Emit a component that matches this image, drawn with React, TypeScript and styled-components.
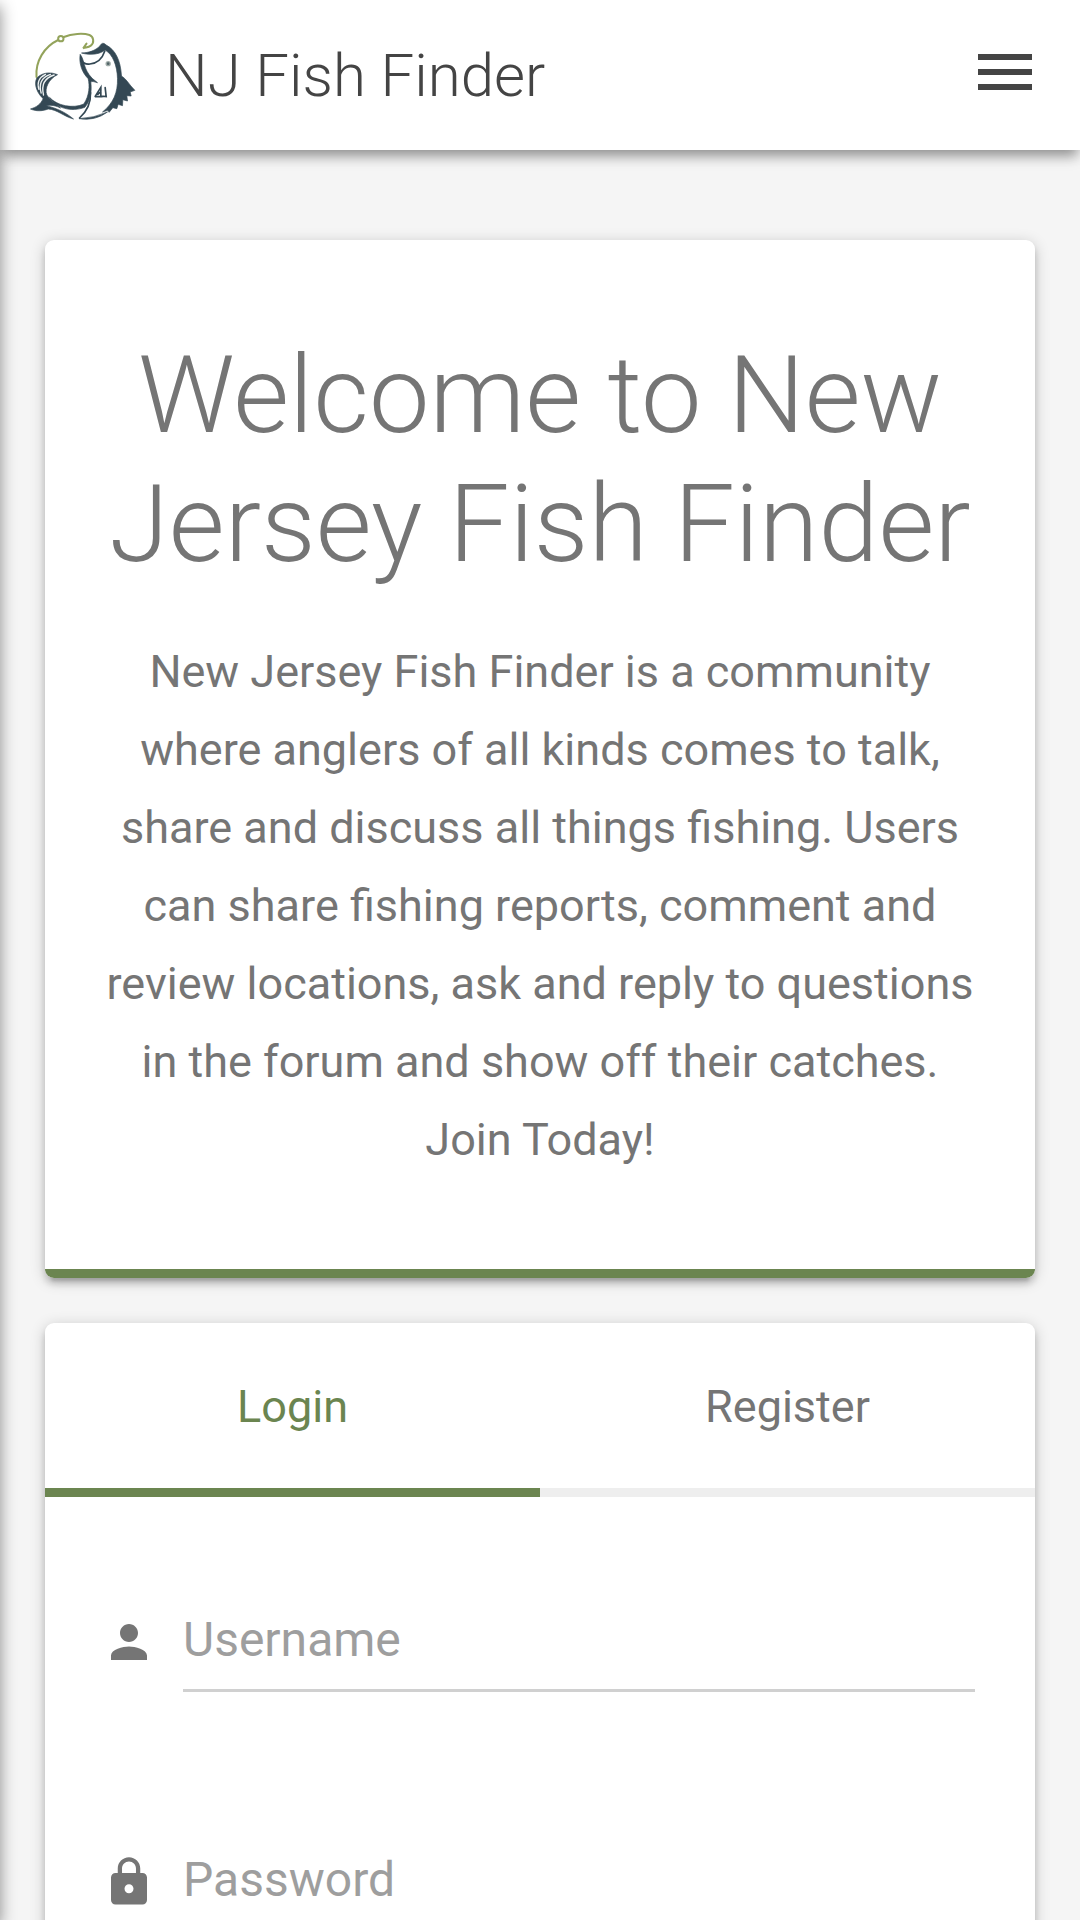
import React, { useState } from "react";
import styled, { createGlobalStyle } from "styled-components";

const green = "#6b8550";
const grey = "#757575";
const raised =
  "0 6px 6px 0 rgba(0,0,0,.14), 0 9px 3px -6px rgba(0,0,0,.12), 0 3px 15px 0 rgba(0,0,0,.2)";

const GlobalStyle = createGlobalStyle`
  *, *::before, *::after { box-sizing: border-box; }
  html { overflow-x: hidden; scrollbar-width: none; }
  body {
    margin: 0;
    background: #f5f5f5;
    color: ${grey};
    font: 400 45px/78px Roboto, "Liberation Sans", sans-serif;
  }
`;

const NavBar = styled.header`
  display: flex;
  align-items: center;
  justify-content: space-between;
  height: 150px;
  padding: 2px 39px 0 30px;
  background: #fff;
  box-shadow: 0 9px 12px -3px rgba(0,0,0,.36), 0 3px 15px 0 rgba(0,0,0,.1);
`;

const Brand = styled.a`
  display: flex;
  align-items: center;
  gap: 29px;
  color: #444;
  font-size: 60px;
  font-weight: 300;
  text-decoration: none;
`;

const Logo = styled.svg`
  width: 106px;
  height: 88px;
`;

const MenuButton = styled.button`
  display: flex;
  padding: 0 0 8px;
  border: 0;
  background: none;
  color: #444;
`;

const Icon = styled.svg<{ $size: number }>`
  flex: none;
  width: ${(p) => p.$size}px;
  height: ${(p) => p.$size}px;
  fill: currentColor;
`;

const SideNav = styled.aside`
  position: fixed;
  top: 0;
  right: 100%;
  width: 300px;
  height: 100%;
  background: #fff;
  box-shadow: 0 6px 15px 0 rgba(0,0,0,.44);
`;

const Main = styled.main`
  display: flex;
  flex-direction: column;
  gap: 45px;
  padding: 90px 45px 45px;
`;

const Card = styled.section`
  overflow: hidden;
  border-radius: 9px;
  background: #fff;
  box-shadow: ${raised};
`;

const Intro = styled.div`
  padding: 91px 60px 90px;
  border-bottom: 9px solid ${green};
  text-align: center;
`;

const Heading = styled.h1`
  margin: 0 0 44px;
  font-size: 108px;
  font-weight: 300;
  line-height: 129px;
`;

const Copy = styled.p`
  margin: 0;
`;

const Tabs = styled.div`
  display: grid;
  grid-template-columns: 1fr 1fr;
`;

const Tab = styled.button<{ $active: boolean }>`
  height: 174px;
  padding: 2px 0 0;
  border: 0;
  border-bottom: 9px solid ${(p) => (p.$active ? green : "#eee")};
  background: none;
  color: ${(p) => (p.$active ? green : grey)};
  font: inherit;
`;

const Form = styled.form`
  display: flex;
  flex-direction: column;
  gap: 139px;
  padding: 94px 60px 120px 57px;
`;

const Field = styled.label`
  display: flex;
  align-items: center;
  gap: 27px;
`;

const Input = styled.input`
  flex: 1;
  min-width: 0;
  height: 101px;
  padding: 0 0 1px;
  border: 0;
  border-bottom: 3px solid #d0d0d0;
  border-radius: 0;
  outline: 0;
  background: none;
  color: #444;
  font: inherit;
  font-size: 48px;
  &::placeholder { color: #9e9e9e; opacity: 1; }
`;

const FishLogo = () => (
  <Logo viewBox="90 97 317 264" fill="none" aria-hidden="true">
    <g stroke="#93a35b" strokeWidth="6" strokeLinecap="round">
      <path d="M109 232C105 185 132 141 174 121" />
      <circle cx="182" cy="117" r="8" />
      <path d="M191 112C215 102 249 100 268 106C281 111 283 130 272 138C264 144 255 143 249 146L259 132" />
    </g>
    <g fill="#344854" stroke="#344854" strokeWidth="2" strokeLinejoin="round">
      <path d="M244 160C267 159 285 153 299 139Q307 124 318 136C346 151 361 181 364 229C379 238 386 254 404 272L390 277L393 289L380 288L382 304L368 300L367 318L354 314L350 327L338 324L327 338L323 332L307 337C340 310 353 278 352 237C351 197 338 165 315 151C300 163 273 168 244 160Z" />
      <path d="M240 164C254 181 248 207 276 236L292 249C281 246 275 244 272 247C276 284 268 306 254 323C213 338 168 326 148 293C170 318 218 328 251 313C268 287 269 258 264 237C244 217 236 189 240 164Z" />
      <path d="M172 225C151 216 126 218 110 235C99 256 114 284 129 297C121 314 110 322 91 328C109 336 129 334 144 328C172 330 190 350 220 358C194 336 166 325 139 318C153 315 168 318 181 325C167 310 151 304 140 286C132 267 146 237 172 225Z" />
      <path d="M237 357Q285 365 322 337Q282 355 237 357Z" />
    </g>
    <g stroke="#344854" strokeWidth="5" strokeLinecap="round">
      <path d="M242 181Q253 196 269 193Q302 190 314 154" />
      <path d="M271 279Q273 323 238 355" />
      <path d="M285 290L302 263V289L318 291L315 264M286 291H305M293 284L302 276" />
    </g>
    <g stroke="#edf1f1" strokeWidth="4" strokeLinecap="round">
      <path d="M151 224Q111 238 123 280M162 226Q119 239 130 286M136 224Q107 238 116 269" />
    </g>
    <circle cx="324" cy="192" r="8" fill="#a0aca9" />
    <circle cx="324" cy="192" r="4" fill="#536568" />
  </Logo>
);

export default function App() {
  const [tab, setTab] = useState("Login");
  return (
    <>
      <GlobalStyle />
      <NavBar>
        <Brand href="#">
          <FishLogo />
          NJ Fish Finder
        </Brand>
        <MenuButton type="button" aria-label="Open menu">
          <Icon $size={72} viewBox="0 0 24 24">
            <path d="M3 18h18v-2H3v2zm0-5h18v-2H3v2zm0-7v2h18V6H3z" />
          </Icon>
        </MenuButton>
      </NavBar>
      <SideNav aria-hidden="true" />
      <Main>
        <Card>
          <Intro>
            <Heading>Welcome to New Jersey Fish Finder</Heading>
            <Copy>
              New Jersey Fish Finder is a community where anglers of all kinds
              comes to talk, share and discuss all things fishing. Users can
              share fishing reports, comment and review locations, ask and reply
              to questions in the forum and show off their catches. Join Today!
            </Copy>
          </Intro>
        </Card>
        <Card>
          <Tabs role="tablist">
            {["Login", "Register"].map((name) => (
              <Tab
                key={name}
                type="button"
                role="tab"
                aria-selected={tab === name}
                $active={tab === name}
                onClick={() => setTab(name)}
              >
                {name}
              </Tab>
            ))}
          </Tabs>
          <Form>
            <Field>
              <Icon $size={54} viewBox="0 0 24 24" aria-hidden="true">
                <path d="M12 12c2.21 0 4-1.79 4-4s-1.79-4-4-4-4 1.79-4 4 1.79 4 4 4zm0 2c-2.67 0-8 1.34-8 4v2h16v-2c0-2.66-5.33-4-8-4z" />
              </Icon>
              <Input type="text" placeholder="Username" aria-label="Username" />
            </Field>
            <Field>
              <Icon $size={54} viewBox="0 0 24 24" aria-hidden="true">
                <path d="M18 8h-1V6c0-2.76-2.24-5-5-5S7 3.24 7 6v2H6c-1.1 0-2 .9-2 2v10c0 1.1.9 2 2 2h12c1.1 0 2-.9 2-2V10c0-1.1-.9-2-2-2zm-6 9c-1.1 0-2-.9-2-2s.9-2 2-2 2 .9 2 2-.9 2-2 2zm3.100-9H8.900V6c0-1.710 1.390-3.100 3.100-3.100s3.100 1.390 3.100 3.100v2z" />
              </Icon>
              <Input type="password" placeholder="Password" aria-label="Password" />
            </Field>
          </Form>
        </Card>
      </Main>
    </>
  );
}
